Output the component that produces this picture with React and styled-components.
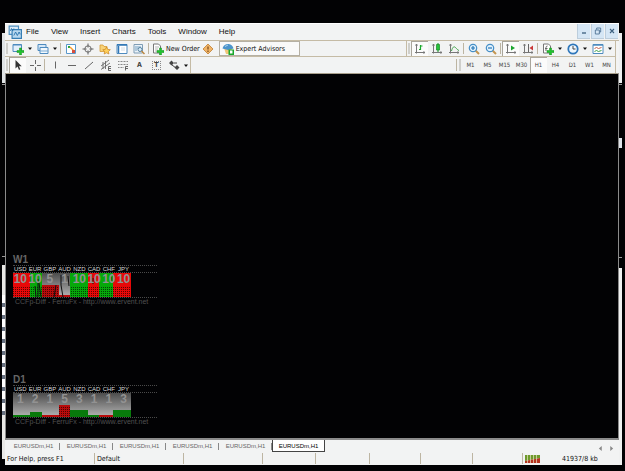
import React from "react";
import styled, { createGlobalStyle } from "styled-components";

const GlobalStyle = createGlobalStyle`
  * { box-sizing: border-box; }
  body {
    margin: 0;
    background: #020204;
    font-family: "DejaVu Sans Condensed", "Liberation Sans", sans-serif;
  }
`;

const Desktop = styled.div`
  display: flex;
  min-height: 100vh;
  padding: 23px 3px 6px 2px;
  background: #020204;
`;

const Sliver = styled.div`
  display: flex;
  flex-direction: column;
  width: 3px;
  padding-top: 10px;
`;

const SliverPart = styled.div`
  flex: ${(props) => props.$size} 0 0;
  background: ${(props) => props.$fill};
`;

const Terminal = styled.main`
  flex: 1;
  display: flex;
  flex-direction: column;
  min-width: 0;
  background: #f2f3f3;
`;

const PlainButton = styled.button`
  font-family: inherit;
  border: 0;
  padding: 0;
  margin: 0;
  background: none;
`;

const MenuBar = styled.header`
  display: flex;
  align-items: center;
  height: 18px;
  padding: 0 1px 0 3px;
  border-top: 1px solid #fff;
  border-bottom: 1px solid #c5bba5;
`;

const Menu = styled.nav`
  display: flex;
  gap: 12px;
  margin-left: 4px;
  flex: 1;
`;

const MenuItem = styled(PlainButton)`
  font-family: "Liberation Sans", sans-serif;
  font-size: 8px;
  line-height: 12px;
  color: #111;
`;

const WindowButtons = styled.div`
  display: flex;
  gap: 1px;
  align-self: flex-start;
`;

const WindowButton = styled(PlainButton)`
  display: flex;
  width: 13px;
  height: 15px;
  align-items: center;
  justify-content: center;
  border: solid #bccddc;
  border-width: 0 0 1px 1px;
  background: #d5e6f5;
`;

const ToolRow = styled.div`
  display: flex;
  justify-content: space-between;
  height: 16px;
  padding: 0 3px 0 0;
`;

const ToolGroup = styled.div`
  display: flex;
  align-items: stretch;
  border-right: 1px solid #c5bba5;
  border-bottom: ${(props) => (props.$line ? "1px solid #c5bba5" : "0")};
  flex: ${(props) => (props.$grow ? 1 : "none")};
  padding-right: ${(props) => (props.$end ? "1px" : "0")};
`;

const Grip = styled.span`
  width: 2px;
  margin: 2px 1px;
  background: #cfcfcb;
`;

const Separator = styled.span`
  width: 1px;
  margin: 2px 1px;
  background: #bdb5a2;
`;

const ToolButton = styled(PlainButton)`
  display: flex;
  width: 17px;
  align-items: center;
  justify-content: center;
  font-size: 6px;
  line-height: 8px;
  color: #444;
  ${(props) => props.$active && "background: #fbfbfb; box-shadow: inset 1px 1px 0 #aaa69c;"}
`;

const TextButton = styled(PlainButton)`
  display: flex;
  align-items: center;
  font-size: 7px;
  line-height: 10px;
  color: #111;
  white-space: nowrap;
`;

const AdvisorButton = styled(TextButton)`
  width: 81px;
  margin: 0 0 0 2px;
  border: 1px solid #b5b0a4;
  background: #f9f9f9;
`;

const IconSlot = styled.span`
  display: flex;
  justify-content: center;
  width: 16px;
`;

const CaretButton = styled(PlainButton)`
  display: flex;
  width: 8px;
  align-items: center;
  justify-content: center;
`;

const ChartArea = styled.section`
  flex: 1;
  display: flex;
  flex-direction: column;
  justify-content: flex-end;
  gap: 70px;
  padding: 0 0 13px 7px;
  background: #020204;
  border: solid #8b8b8b;
  border-width: 1px 1px 0 1px;
  border-top-color: #a89f8c;
`;

const Indicator = styled.div`
  width: 144px;
  height: 50px;
  font-family: "Liberation Sans", sans-serif;
`;

const Period = styled.h2`
  margin: 0;
  height: 10px;
  font-size: 10px;
  line-height: 10px;
  color: #666;
`;

const Currencies = styled.div`
  height: 7px;
  padding-right: 26px;
  border-top: 1px dotted #4a4a4a;
  display: grid;
  grid-template-columns: repeat(8, 1fr);
  font-size: 6px;
  line-height: 6px;
  color: #d8d8d8;
`;

const Currency = styled.span`
  text-align: center;
`;

const Strength = styled.div`
  position: relative;
  height: 26px;
  border: dotted #4a4a4a;
  border-width: 1px 0;
`;

const Scores = styled.div`
  position: absolute;
  top: 0;
  left: 0;
  width: 118px;
  display: grid;
  grid-template-columns: repeat(8, 1fr);
  font-size: 12px;
  font-weight: bold;
  line-height: 12px;
  color: #929292;
`;

const Score = styled.span`
  display: flex;
  justify-content: center;
`;

const Credit = styled.p`
  margin: 0 0 0 2px;
  font-size: 7px;
  line-height: 7px;
  color: #505050;
  white-space: nowrap;
`;

const TabBar = styled.div`
  display: flex;
  height: 14px;
  padding: 0 5px 0 2px;
  border-top: 2px solid #8b8b8b;
`;

const Tab = styled(PlainButton)`
  width: 53px;
  height: 12px;
  font-family: "Liberation Sans", sans-serif;
  font-size: 6px;
  line-height: 8px;
  color: ${(props) => (props.$active ? "#000" : "#666")};
  ${(props) =>
    props.$active
      ? "background: #fff; border: solid #444; border-width: 0 1px 1px;"
      : "background: linear-gradient(#888, #888) right 3px / 1px 7px no-repeat;"}
`;

const TabArrows = styled.div`
  display: flex;
  gap: 6px;
  margin-left: auto;
  align-items: center;
`;

const StatusBar = styled.footer`
  display: grid;
  grid-template-columns: 90fr 89fr 79fr 53fr 54fr 51fr 52fr 50fr 96fr;
  height: 13px;
  padding: 1px 0;
`;

const StatusCell = styled.div`
  display: flex;
  align-items: center;
  gap: 22px;
  padding-left: 2px;
  font-size: 7px;
  line-height: 10px;
  color: #111;
  white-space: nowrap;
  border-right: 1px solid ${(props) => (props.$last ? "transparent" : "#bdb5a2")};
`;

const Icon = ({ children, size = 12 }) => (
  <svg width={size} height={size} viewBox="0 0 12 12" fill="none" aria-hidden="true">
    {children}
  </svg>
);

const plus = <path d="M7.500 5h2v2.500H12v2H9.500V12h-2V9.500H5v-2h2.500z" fill="#1fc42c" stroke="#14891d" strokeWidth=".5" />;
const axes = <path d="M2.500 1v9.500M1 9.500h10M1.500 2.500l1-1.500 1 1.500M9.500 8.500l1.500 1-1.500 1" stroke="#777" />;

const icons = {
  logo: <><path d="M1 1h8v7H1z" fill="#dcecf8" stroke="#4d8fc0" /><path d="M3.500 4h8v7.500h-8z" fill="#b8d8ef" stroke="#367eb4" /><path d="M2 5l1-2 1 2 1-2M5 9l1.500-3L8 9l1.500-3L10.500 8" stroke="#2b74ad" strokeWidth=".8" /></>,
  newChart: <><path d="M1 1.500h8.500v7H1z" fill="#e4effa" stroke="#4e8bbf" /><path d="M1 2h8.500" stroke="#4e8bbf" />{plus}</>,
  profiles: <><path d="M1 1.500h8v6H1z" fill="#d5e7f7" stroke="#4e8bbf" /><path d="M3 4.500h8v6H3z" fill="#f2f8fd" stroke="#4e8bbf" /><path d="M3 8h8" stroke="#78a9d2" /></>,
  market: <><path d="M1.500 1.500h9v9h-9z" fill="#fff" stroke="#5a98ca" /><path d="M3 3h2v2H3z" fill="#25a83b" /><path d="M5 4l4 4" stroke="#f59c2c" strokeWidth="1.500" /><path d="M7 7h3v3H7z" fill="#d9503c" /></>,
  cross: <><circle cx="6" cy="6" r="3.200" stroke="#707070" /><path d="M6 .5v4M6 7.500v4M.5 6h4M7.500 6h4" stroke="#606060" /></>,
  navigator: <><path d="M1 2h3l1 1.500h3v5H1z" fill="#f8d277" stroke="#d59a32" strokeWidth=".8" /><path d="M7.500 4l1.200 2.400 2.600.3-1.900 1.800.5 2.500-2.400-1.200L5.200 11l.4-2.500-1.800-1.800 2.500-.3z" fill="#ffd05a" stroke="#c98320" strokeWidth=".7" /></>,
  terminal: <><path d="M1 1.500h10v9H1z" fill="#fff" stroke="#4e8bbf" /><path d="M1 2h10M2.500 3v7" stroke="#2e75b5" strokeWidth="1.500" /><path d="M5 5h4M5 7h4" stroke="#d2dce5" /></>,
  tester: <><path d="M1 1.500h8.500v8.500H1z" fill="#eaf2f8" stroke="#7f9db5" /><path d="M3 3v5M5 3v3M7 3v2" stroke="#74a0c2" /><circle cx="7" cy="6.500" r="2" fill="#dceefb" stroke="#56829f" /><path d="M8.500 8l3 3" stroke="#bb8740" strokeWidth="1.500" /></>,
  order: <><path d="M1.500 1h5l2 2v7h-7z" fill="#fff" stroke="#777" /><path d="M3 4h4M3 6h3M3 8h2" stroke="#999" strokeWidth=".7" />{plus}</>,
  diamond: <><path d="M6 1l5 5-5 5-5-5z" fill="#f0b468" stroke="#c98f4a" /><path d="M6 3.500v3M6 7.500v1.500" stroke="#83501c" strokeWidth="1.300" /></>,
  advisor: <><path d="M2 5h8l-1 6H4z" fill="#f0c678" /><path d="M.5 5.500C1.500 2 4 1 6 1s4.500 1 5.500 4.500L6 7z" fill="#4c94cb" /><path d="M3 3.500l3-1.500" stroke="#a9d2ee" /><path d="M6.500 6.500H12V12H6.500z" fill="#19a82b" /><path d="M8 7.500h2.500v3H8z" fill="#fff" /></>,
  bars: <>{axes}<path d="M6.500 2v5M6.500 3h2M5 6.500h1.500" stroke="#19a82b" strokeWidth="1.200" /></>,
  candles: <>{axes}<path d="M7 0v9" stroke="#158c24" /><path d="M5.500 1.500h3v5.500h-3z" fill="#28c33b" stroke="#158c24" strokeWidth=".7" /></>,
  line: <>{axes}<path d="M3.500 8c1-4 2.500-5 4-3.500s2 2.500 3.500 3" stroke="#3fa34a" /></>,
  zoomIn: <><path d="M7.500 7.500l3.500 3.500" stroke="#c49650" strokeWidth="2" /><circle cx="5" cy="5" r="3.700" fill="#e3f2fc" stroke="#468fc7" strokeWidth="1.200" /><path d="M3 5h4M5 3v4" stroke="#2475b5" strokeWidth="1.200" /></>,
  zoomOut: <><path d="M7.500 7.500l3.500 3.500" stroke="#c49650" strokeWidth="2" /><circle cx="5" cy="5" r="3.700" fill="#e3f2fc" stroke="#468fc7" strokeWidth="1.200" /><path d="M3 5h4" stroke="#2475b5" strokeWidth="1.200" /></>,
  scroll: <>{axes}<path d="M6 2.500l4 2.500-4 2.500z" fill="#1ba52d" /></>,
  shift: <>{axes}<path d="M6.500 1v8" stroke="#666" /><path d="M11 2.500v5L7.500 5z" fill="#c93737" /></>,
  indicators: <><path d="M1.500 1h5l2 2v7h-7z" fill="#fff" stroke="#777" /><path d="M5.500 3c-2 0-1.500 2-1.500 5M3 5.500h2.500" stroke="#666" />{plus}</>,
  periods: <><circle cx="6" cy="6" r="4.700" fill="#eff7fd" stroke="#2e77bb" strokeWidth="1.800" /><path d="M6 3v3h2.500" stroke="#444" /></>,
  template: <><path d="M1 1.500h10v9H1z" fill="#fff" stroke="#4e8bbf" /><path d="M1 2h10" stroke="#4e8bbf" strokeWidth="1.500" /><path d="M2.500 5.500l2-1 2 1 3-1" stroke="#c5604c" /><path d="M2.500 8.500l2-1 2 1 3-1" stroke="#3ba04a" /></>,
  cursor: <path d="M3.500 1v8.500l2-2 1.500 3.500 1.300-.7L7 7.200h2.700z" fill="#333" />,
  crosshair: <path d="M6.500 1v4M6.500 8v4M1 6.500h4M8 6.500h4" stroke="#666" />,
  vertical: <path d="M6.500 2.500v7" stroke="#666" />,
  horizontal: <path d="M2 6.500h8" stroke="#666" />,
  trend: <path d="M2 10l8-7" stroke="#666" />,
  channel: <><path d="M1 7l8-6M1 10.500L10 4M3 3v7M5.500 2v8" stroke="#666" strokeWidth=".9" /><path d="M11 7.500H8.500v4H11M8.500 9.500H11" stroke="#444" strokeWidth=".8" /></>,
  fibo: <><path d="M1 2.500h10M1 5.500h10M1 8.500h6" stroke="#888" strokeDasharray="1 .5" /><path d="M11 7.500H8.500v4M8.500 9.500H11" stroke="#444" strokeWidth=".8" /></>,
  arrows: <><path d="M3.500 1.500L6 4 3.500 6.500 1 4zM9 6l2.500 2.500L9 11 6.500 8.500z" fill="#444" /><path d="M4 6l4 3M6 4h3" stroke="#444" /></>,
};

const Label = styled.span`
  padding: 0 1px;
  border: ${(props) => (props.$boxed ? "1px dotted #888" : "0")};
  font-size: 7px;
  font-weight: bold;
  line-height: 7px;
`;

const Tool = ({ name, title, active }) => (
  <ToolButton aria-label={title || name} $active={active}>
    <Icon>{icons[name]}</Icon>
  </ToolButton>
);

const Caret = () => (
  <CaretButton aria-label="More">
    <svg width="4" height="3" viewBox="0 0 4 3" aria-hidden="true">
      <path d="M0 .5h4L2 3z" fill="#111" />
    </svg>
  </CaretButton>
);

const periods = ["M1", "M5", "M15", "M30", "H1", "H4", "D1", "W1", "MN"];
const menus = ["File", "View", "Insert", "Charts", "Tools", "Window", "Help"];
const currencies = ["USD", "EUR", "GBP", "AUD", "NZD", "CAD", "CHF", "JPY"];
const tabs = [1, 2, 3, 4, 5, 6];

const indicators = [
  {
    period: "W1",
    scores: [10, 10, 5, 1, 10, 10, 10, 10],
    bars: [[17, 24, "red"], [12, 24, "green"], [17, 12, "red"], [11, 2, "red"], [18, 24, "green"], [11, 24, "red"], [14, 24, "green"], [18, 24, "red"]],
    noise: "M22 13l1 11M25 6v18M26 10l2 14M43 12l-2 12M48 2v10l2 12M55 3l1 10M80 5v6M98 4v4",
  },
  {
    period: "D1",
    scores: [1, 2, 1, 5, 3, 1, 1, 3],
    bars: [[17, 2, "green"], [12, 5, "green"], [17, 2, "red"], [11, 12, "red"], [18, 7, "green"], [11, 2, "green"], [14, 2, "red"], [18, 7, "green"]],
    noise: "",
  },
];

const StrengthBars = ({ id, bars, noise }) => {
  let x = 0;
  return (
    <svg width="118" height="24" viewBox="0 0 118 24" display="block" aria-hidden="true">
      <defs>
        <linearGradient id={`gray-${id}`} x1="0" y1="0" x2="0" y2="1">
          <stop offset="0" stopColor="#4c4c4c" />
          <stop offset="1" stopColor="#b4b4b4" />
        </linearGradient>
        <pattern id={`dots-${id}`} width="2" height="2" patternUnits="userSpaceOnUse">
          <path d="M0 0h1v1H0z" fill="#000" opacity=".6" />
        </pattern>
      </defs>
      <rect width="118" height="24" fill={`url(#gray-${id})`} />
      {bars.map(([width, height, color], i) => {
        const left = x;
        x += width;
        const fill = color === "red" ? (height > 12 ? "#e80808" : "#b80b0b") : height > 12 ? "#06a80a" : "#087a0b";
        return (
          <g key={i}>
            <rect x={left} y={24 - height} width={width} height={height} fill={fill} />
            {height > 7 && <rect x={left} y="14" width={width} height="10" fill={`url(#dots-${id})`} />}
          </g>
        );
      })}
      <path d={noise} stroke="#111" strokeWidth="1" fill="none" />
    </svg>
  );
};

const App = () => {
  return (
    <>
      <GlobalStyle />
      <Desktop>
        <Sliver>
          <SliverPart $size={50} $fill="#dfe3e5" />
          <SliverPart $size={1} $fill="#020204" />
          <SliverPart $size={1} $fill="#999" />
          <SliverPart $size={171} $fill="#020204" />
          <SliverPart $size={1} $fill="#999" />
          <SliverPart $size={8} $fill="#020204" />
          <SliverPart $size={30} $fill="#e8e8e6" />
          <SliverPart $size={120} $fill="repeating-linear-gradient(#fff 0 8px, #667080 8px 12px)" />
          <SliverPart $size={44} $fill="#e8e8e6" />
          <SliverPart $size={6} $fill="#020204" />
        </Sliver>
        <Terminal>
          <MenuBar>
            <Icon size={14}>{icons.logo}</Icon>
            <Menu>
              {menus.map((name) => (
                <MenuItem key={name}>{name}</MenuItem>
              ))}
            </Menu>
            <WindowButtons>
              <WindowButton aria-label="Minimize">
                <Icon size={8}><path d="M3 9h6" stroke="#3e6180" strokeWidth="2" /></Icon>
              </WindowButton>
              <WindowButton aria-label="Restore">
                <Icon size={8}><path d="M4 4V1.500h6v6H8M2 4.500h6v6H2z" stroke="#4b7092" strokeWidth="1.300" /></Icon>
              </WindowButton>
              <WindowButton aria-label="Close">
                <Icon size={8}><path d="M3 3l6 6M9 3L3 9" stroke="#3e6180" strokeWidth="1.700" /></Icon>
              </WindowButton>
            </WindowButtons>
          </MenuBar>
          <ToolRow>
            <ToolGroup $grow $line>
              <Grip />
              <Tool name="newChart" title="New chart" /><Caret />
              <Tool name="profiles" title="Profiles" /><Caret />
              <Separator />
              <Tool name="market" title="Market Watch" />
              <Tool name="cross" title="Data Window" />
              <Tool name="navigator" title="Navigator" />
              <Tool name="terminal" title="Terminal" />
              <Tool name="tester" title="Strategy Tester" />
              <Separator />
              <TextButton><IconSlot><Icon>{icons.order}</Icon></IconSlot>New Order</TextButton>
              <Tool name="diamond" title="MetaEditor" />
              <AdvisorButton><IconSlot><Icon>{icons.advisor}</Icon></IconSlot>Expert Advisors</AdvisorButton>
            </ToolGroup>
            <ToolGroup $line $end>
              <Grip />
              <Tool name="bars" title="Bar chart" active />
              <Tool name="candles" title="Candlesticks" />
              <Tool name="line" title="Line chart" />
              <Separator />
              <Tool name="zoomIn" title="Zoom in" />
              <Tool name="zoomOut" title="Zoom out" />
              <Separator />
              <Tool name="scroll" title="Auto scroll" active />
              <Tool name="shift" title="Chart shift" />
              <Separator />
              <Tool name="indicators" title="Indicators" /><Caret />
              <Tool name="periods" title="Periods" /><Caret />
              <Tool name="template" title="Templates" /><Caret />
            </ToolGroup>
          </ToolRow>
          <ToolRow>
            <ToolGroup>
              <Grip />
              <Tool name="cursor" active />
              <Tool name="crosshair" />
              <Separator />
              <Tool name="vertical" title="Vertical line" />
              <Tool name="horizontal" title="Horizontal line" />
              <Tool name="trend" title="Trendline" />
              <Tool name="channel" title="Channel" />
              <Tool name="fibo" title="Fibonacci" />
              <ToolButton><Label>A</Label></ToolButton>
              <ToolButton><Label $boxed>T</Label></ToolButton>
              <Tool name="arrows" /><Caret />
            </ToolGroup>
            <ToolGroup>
              <Separator />
              <Grip />
              {periods.map((period) => (
                <ToolButton key={period} $active={period === "H1"}>{period}</ToolButton>
              ))}
            </ToolGroup>
          </ToolRow>
          <ChartArea>
            {indicators.map((item) => (
              <Indicator key={item.period}>
                <Period>{item.period}</Period>
                <Currencies>
                  {currencies.map((name) => (
                    <Currency key={name}>{name}</Currency>
                  ))}
                </Currencies>
                <Strength>
                  <StrengthBars id={item.period} bars={item.bars} noise={item.noise} />
                  <Scores>
                    {item.scores.map((score, i) => (
                      <Score key={i}>{score}</Score>
                    ))}
                  </Scores>
                </Strength>
                <Credit>CCFp-Diff - FerruFx - http://www.ervent.net</Credit>
              </Indicator>
            ))}
          </ChartArea>
          <TabBar>
            {tabs.map((id) => (
              <Tab key={id} $active={id === 6}>EURUSDm,H1</Tab>
            ))}
            <TabArrows>
              <PlainButton aria-label="Previous tabs"><Icon size={5}><path d="M9 0v12L2 6z" fill="#888" /></Icon></PlainButton>
              <PlainButton aria-label="Next tabs"><Icon size={5}><path d="M3 0v12l7-6z" fill="#888" /></Icon></PlainButton>
            </TabArrows>
          </TabBar>
          <StatusBar>
            <StatusCell>For Help, press F1</StatusCell>
            <StatusCell>Default</StatusCell>
            <StatusCell />
            <StatusCell />
            <StatusCell />
            <StatusCell />
            <StatusCell />
            <StatusCell />
            <StatusCell $last>
              <svg width="15" height="8" viewBox="0 0 15 8" aria-hidden="true">
                <path d="M0 0h15v3L0 6z" fill="#6f9a2c" />
                <path d="M0 6l15-3v5H0z" fill="#b5331f" />
                <path d="M2.500 0v8M5.500 0v8M8.500 0v8M11.500 0v8" stroke="#e9e2c8" strokeWidth=".7" />
              </svg>
              41937/8 kb
            </StatusCell>
          </StatusBar>
        </Terminal>
        <Sliver>
          <SliverPart $size={50} $fill="#eef0f1" />
          <SliverPart $size={1} $fill="#020204" />
          <SliverPart $size={1} $fill="#999" />
          <SliverPart $size={53} $fill="#020204" />
          <SliverPart $size={10} $fill="#dfe3ea" />
          <SliverPart $size={109} $fill="#020204" />
          <SliverPart $size={1} $fill="#999" />
          <SliverPart $size={10} $fill="#020204" />
          <SliverPart $size={197} $fill="#f0f1f1" />
        </Sliver>
      </Desktop>
    </>
  );
};

export default App;
